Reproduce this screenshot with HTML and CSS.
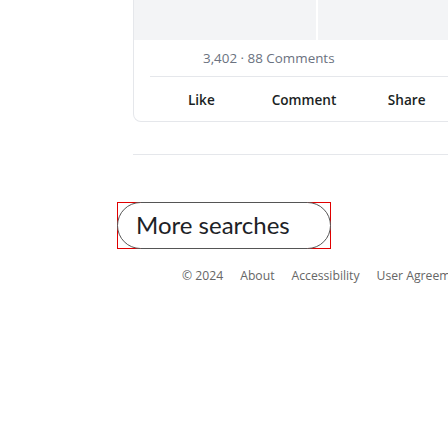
FILE: index.html
```
<!DOCTYPE html>
<html>
<head>
<meta charset="utf-8">
<link rel="stylesheet" href="styles.css">
</head>
<body>
<div class="page">
  <article class="card">
    <div class="media">
      <div class="media-cell"></div>
      <div class="media-cell"></div>
    </div>
    <div class="stats">3,402 · 88 Comments</div>
    <div class="actions">
      <button class="action">Like</button>
      <button class="action">Comment</button>
      <button class="action">Share</button>
    </div>
  </article>
  <hr class="divider">
  <div class="more-wrap">
    <button class="more">More searches</button>
  </div>
  <footer class="footer">
    <span>© 2024</span>
    <a href="#">About</a>
    <a href="#">Accessibility</a>
    <a href="#">User Agreement</a>
  </footer>
</div>
</body>
</html>
```
FILE: styles.css
```
html, body {
  margin: 0;
  padding: 0;
  background: #ffffff;
  overflow: hidden;
}
body {
  width: 448px;
  height: 448px;
  font-family: "Open Sans", "Noto Sans", sans-serif;
  color: #1f2328;
}
.page {
  display: flex;
  flex-direction: column;
  width: 600px;
}
.card {
  margin-left: 133px;
  width: 342px;
  border: 1px solid #e5e7eb;
  border-top: none;
  border-radius: 0 0 8px 8px;
  box-sizing: border-box;
}
.media {
  display: grid;
  grid-template-columns: 182px 1fr;
  column-gap: 2px;
  height: 40px;
}
.media-cell {
  background: #f3f4f6;
}
.stats {
  height: 36px;
  display: flex;
  align-items: center;
  padding-left: 69px;
  font-size: 13.4px;
  color: #6b7280;
}
.actions {
  margin: 0 16px;
  border-top: 1px solid #e5e7eb;
  display: grid;
  grid-template-columns: repeat(3, 1fr);
  height: 44px;
}
.action {
  border: none;
  background: none;
  font-family: inherit;
  font-size: 13.6px;
  font-weight: 600;
  color: #1b1f24;
  padding: 0;
}
.divider {
  margin: 32px 0 0 133px;
  border: none;
  border-top: 1px solid #e5e7eb;
  height: 0;
}
.more-wrap {
  margin: 47px 0 0 117px;
  width: 214px;
  height: 47px;
  border: 1px solid #e00000;
  box-sizing: border-box;
  display: flex;
}
.more {
  margin: -1px;
  flex: 1;
  border: 1px solid #555;
  border-radius: 24px;
  background: #fff;
  font-family: "Lato", "Open Sans", sans-serif;
  font-size: 24px;
  color: #1d2226;
  text-align: left;
  padding: 0 0 2px 18px;
}
.footer {
  margin: 18px 0 0 182px;
  display: flex;
  gap: 17px;
  font-size: 12.2px;
  color: #666;
  white-space: nowrap;
}
.footer a {
  color: #666;
  text-decoration: none;
}
```
